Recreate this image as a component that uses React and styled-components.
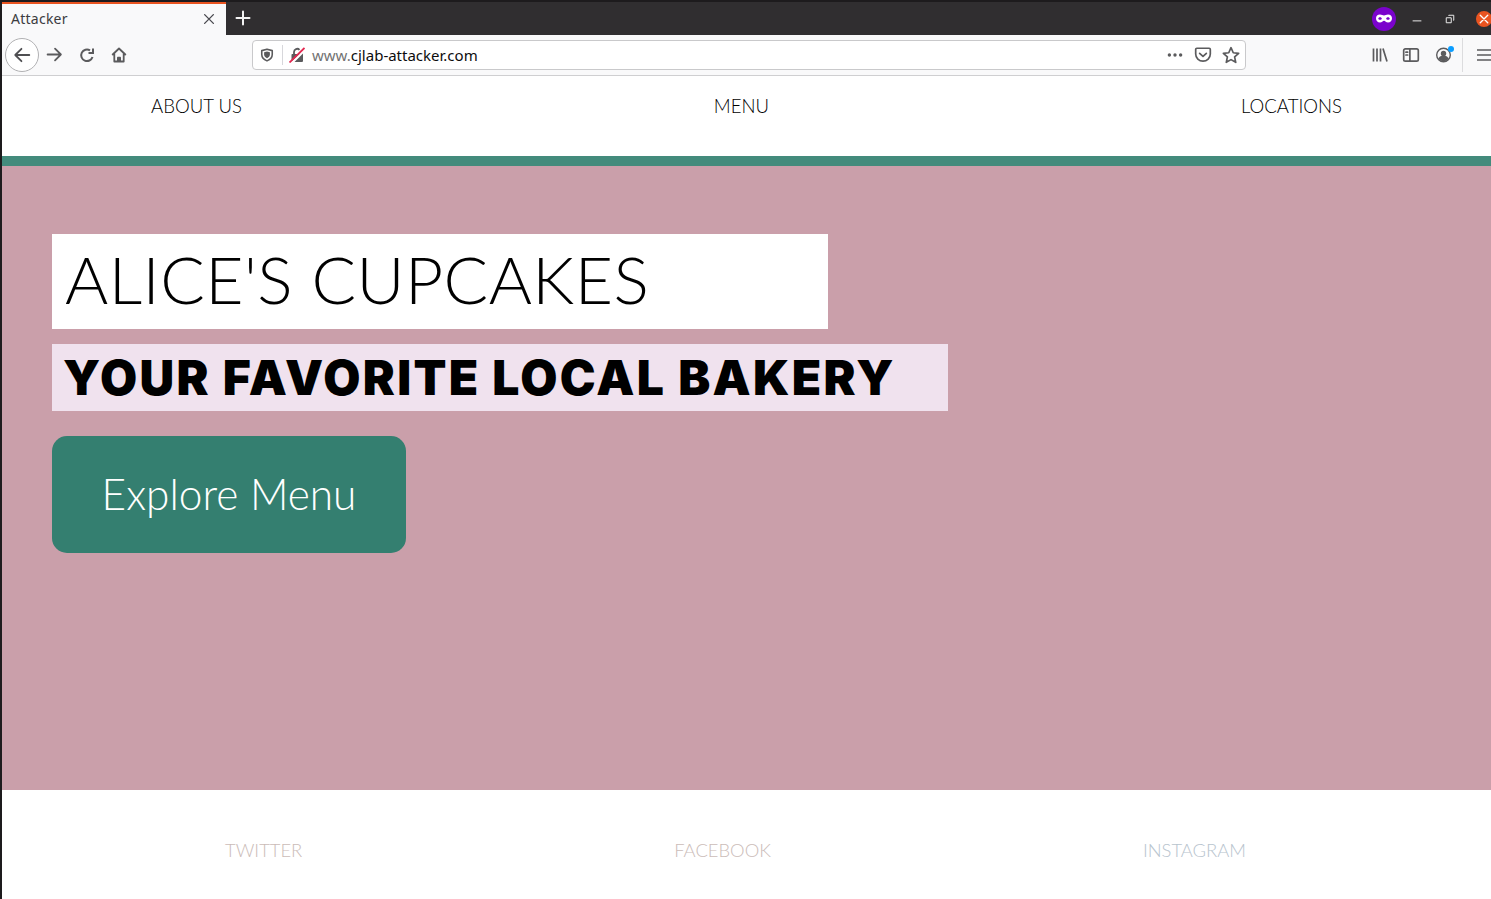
import React from "react";
import styled, { createGlobalStyle } from "styled-components";

const Global = createGlobalStyle`
	html, body {
		margin: 0;
		padding: 0;
		background: #fff;
		overflow: hidden;
	}
	* { box-sizing: border-box; }
`;

const Frame = styled.div`
	width: 1491px;
	height: 899px;
	display: flex;
	flex-direction: column;
	border-left: 2px solid #1d1b1d;
	overflow: hidden;
	font-family: "Lato", "Liberation Sans", sans-serif;
`;

/* browser chrome */
const TabStrip = styled.div`
	height: 35px;
	flex: none;
	display: flex;
	align-items: stretch;
	background: #302e30;
	border-top: 2px solid #1d1b1d;
`;
const Tab = styled.div`
	width: 224px;
	display: flex;
	align-items: center;
	justify-content: space-between;
	padding: 0 10px 2px 9px;
	background: #f9f9fa;
	border-top: 2px solid #e95420;
	font: 14px "Noto Sans", "Open Sans", sans-serif;
	letter-spacing: 0.25px;
	color: #3c3c3f;
`;
const NewTab = styled.div`
	width: 34px;
	padding-bottom: 2px;
	display: flex;
	align-items: center;
	justify-content: center;
`;
const WindowControls = styled.div`
	margin-left: auto;
	margin-right: -1px;
	display: flex;
	align-items: center;
`;
const PrivateBadge = styled.div`
	width: 24px;
	height: 24px;
	border-radius: 50%;
	background: #7a03cc;
	display: flex;
	align-items: center;
	justify-content: center;
	margin-right: 4px;
`;
const WinButton = styled.div`
	width: 33px;
	display: flex;
	align-items: center;
	justify-content: center;
`;
const CloseButton = styled.div`
	width: 16px;
	height: 16px;
	margin-left: 10px;
	border-radius: 50%;
	background: #e95420;
	display: flex;
	align-items: center;
	justify-content: center;
`;
const Toolbar = styled.div`
	height: 41px;
	flex: none;
	display: flex;
	align-items: center;
	background: #f9f9fa;
	border-bottom: 1px solid #cfcfd1;
	padding: 0 0 1px 3px;
`;
const BackButton = styled.div`
	width: 34px;
	height: 34px;
	flex: none;
	border-radius: 50%;
	border: 1px solid #b1b1b3;
	background: #fff;
	display: flex;
	align-items: center;
	justify-content: center;
`;
const NavIcons = styled.div`
	flex: none;
	display: flex;
	align-items: center;
	gap: 16px;
	margin-left: 7px;
	width: 206px;
`;
const UrlBar = styled.div`
	flex: none;
	width: 994px;
	height: 30px;
	display: flex;
	align-items: center;
	background: #fff;
	border: 1px solid #c9c9cb;
	border-radius: 4px;
	padding: 0 5px 0 7px;
`;
const UrlDivider = styled.span`
	width: 1px;
	height: 20px;
	background: #d7d7db;
	margin: 0 6px 0 8px;
`;
const UrlText = styled.span`
	margin-left: 7px;
	font: 15px "Noto Sans", "Open Sans", sans-serif;
	color: #0c0c0d;
`;
const UrlPrefix = styled.span`
	color: #737373;
`;
const UrlActions = styled.div`
	margin-left: auto;
	display: flex;
	align-items: center;
	gap: 10px;
`;
const ToolbarRight = styled.div`
	margin-left: 126px;
	display: flex;
	align-items: center;
	gap: 14px;
	flex: 1;
`;
const ToolbarDivider = styled.span`
	width: 1px;
	height: 34px;
	background: #dcdcde;
	margin-left: -6px;
`;

/* page */
const TopNav = styled.nav`
	height: 80px;
	flex: none;
	display: flex;
	justify-content: space-between;
	align-items: flex-start;
	padding: 18px 149px 0;
	background: #fff;
`;
const NavLink = styled.a`
	font-size: 18.6px;
	font-weight: 300;
	line-height: 24px;
	color: #000;
`;
const Stripe = styled.div`
	height: 10px;
	flex: none;
	background: #438b7c;
`;
const Hero = styled.main`
	height: 624px;
	flex: none;
	padding: 68px 50px 0;
	background: #ca9faa;
	display: flex;
	flex-direction: column;
	align-items: flex-start;
`;
const Title = styled.h1`
	margin: 0;
	width: 776px;
	height: 95px;
	padding-left: 13px;
	background: #fff;
	color: #000;
	font-size: 66px;
	font-weight: 300;
	line-height: 90px;
	letter-spacing: 0.45px;
	white-space: nowrap;
`;
const Subtitle = styled.h2`
	margin: 15px 0 0;
	width: 896px;
	height: 67px;
	padding-left: 11px;
	background: #f0e2ee;
	color: #000;
	font-family: "Inter", "Liberation Sans", sans-serif;
	font-size: 48px;
	font-weight: 900;
	line-height: 67px;
	letter-spacing: 2.3px;
	white-space: nowrap;
`;
const ExploreButton = styled.button`
	margin-top: 25px;
	width: 354px;
	height: 117px;
	padding: 0 0 2px;
	border: 0;
	border-radius: 15px;
	background: #347f70;
	color: #fff;
	font-family: "Lato", "Liberation Sans", sans-serif;
	font-size: 42.4px;
	font-weight: 300;
`;
const Footer = styled.footer`
	flex: 1;
	display: flex;
	justify-content: space-between;
	align-items: flex-start;
	padding: 48px 245px 0 223px;
	background: #fff;
`;
const FooterLink = styled.a`
	font-size: 18.4px;
	font-weight: 300;
	line-height: 24px;
	color: ${(p) => p.$color};
`;

const Icon = ({ size = 16, color = "#5b5b5d", sw = 2, children }) => (
	<svg width={size} height={size} viewBox="0 0 16 16" fill="none" stroke={color} strokeWidth={sw} strokeLinecap="round" strokeLinejoin="round">
		{children}
	</svg>
);

const App = () => (
	<Frame>
		<Global />
		<TabStrip>
			<Tab>
				<span>Attacker</span>
				<Icon size={14} color="#4a4a4f" sw={1.6}><path d="M3 3l10 10M13 3L3 13" /></Icon>
			</Tab>
			<NewTab>
				<Icon size={16} color="#f4f4f4"><path d="M8 1.5v13M1.5 8h13" /></Icon>
			</NewTab>
			<WindowControls>
				<PrivateBadge>
					<svg width="16" height="9" viewBox="0 0 16 9">
						<path fill="#fff" fillRule="evenodd" d="M4 0.5C5.6 0.5 6.8 1.4 8 1.4S10.400 0.5 12 0.5C14.500 0.500 16 2 16 4.200C16 6.800 14.500 8.500 12 8.500C10 8.500 9.300 6.700 8 6.700S6 8.500 4 8.500C1.500 8.500 0 6.800 0 4.200C0 2 1.500 0.500 4 0.500ZM4 3.200C3 3.200 2.300 3.800 2.300 4.500S3 5.800 4 5.800S5.800 5.200 5.800 4.500S5 3.200 4 3.200ZM12 3.200C11 3.200 10.200 3.800 10.200 4.500S11 5.800 12 5.800S13.700 5.200 13.700 4.500S13 3.200 12 3.200Z" />
					</svg>
				</PrivateBadge>
				<WinButton>
					<Icon size={10} color="#f4f4f4" sw={1.500}><path d="M1 11h14" strokeLinecap="butt" /></Icon>
				</WinButton>
				<WinButton>
					<Icon size={10} color="#f4f4f4" sw={1.500}><path d="M2 6h8v8H2zM6 3V2h8v8h-1" strokeLinecap="butt" strokeLinejoin="miter" /></Icon>
				</WinButton>
				<CloseButton>
					<Icon size={10} color="#fff" sw={2.2}><path d="M2 2l12 12M14 2L2 14" /></Icon>
				</CloseButton>
			</WindowControls>
		</TabStrip>
		<Toolbar>
			<BackButton>
				<Icon size={18} color="#4f4f52" sw={1.6}><path d="M14.500 8H2M7.500 2.500L2 8l5.500 5.500" /></Icon>
			</BackButton>
			<NavIcons>
				<Icon size={17} sw={1.700}><path d="M1.500 8H14M8.500 2.500L14 8l-5.500 5.500" /></Icon>
				<Icon size={16} sw={2}><path d="M13.500 10A5.800 5.800 0 1 1 11 3.300M14 1.500v4.500h-4.500" strokeLinecap="butt" strokeLinejoin="miter" /></Icon>
				<svg width="16" height="16" viewBox="0 0 16 16">
					<path fill="none" stroke="#5b5b5d" strokeWidth="1.800" strokeLinejoin="round" d="M1.200 8L8 1.500L14.800 8M3.300 6.800V14.500H12.700V6.800" />
					<path fill="#5b5b5d" d="M6 14.500V10.500a.8.8 0 0 1 .8-.8h2.400a.8.8 0 0 1 .8.8v4z" />
				</svg>
			</NavIcons>
			<UrlBar>
				<svg width="14" height="14" viewBox="0 0 16 16">
					<path fill="none" stroke="#5b5b5d" strokeWidth="1.800" strokeLinejoin="round" d="M8 1.300l6 1.700v4.500c0 3.500-2.700 5.900-6 7.200c-3.300-1.300-6-3.700-6-7.200V3z" />
					<path fill="#5b5b5d" d="M8 4l3.300.9v2.600c0 2-1.500 3.400-3.300 4.200c-1.800-.8-3.300-2.200-3.300-4.200V4.900z" />
				</svg>
				<UrlDivider />
				<svg width="16" height="16" viewBox="0 0 16 16">
					<path fill="none" stroke="#5b5b5d" strokeWidth="1.800" d="M5 7.500V5a3.200 3.200 0 0 1 5.500-2.200" />
					<path fill="#5b5b5d" d="M3 7h7.500L2.500 14.500V8a1 1 0 0 1 .5-1zM14 6.500V14a1 1 0 0 1-1 1H5.500z" />
					<path stroke="#e22850" strokeWidth="1.800" d="M0.500 15.500L15.500 1" />
				</svg>
				<UrlText><UrlPrefix>www.</UrlPrefix>cjlab-attacker.com</UrlText>
				<UrlActions>
					<Icon size={18} sw={0}>
						<circle cx="3" cy="8" r="1.500" fill="#5b5b5d" />
						<circle cx="8" cy="8" r="1.500" fill="#5b5b5d" />
						<circle cx="13" cy="8" r="1.500" fill="#5b5b5d" />
					</Icon>
					<Icon size={18} sw={1.500}><path d="M2.500 2h11a1 1 0 0 1 1 1v4a6.500 6.500 0 0 1-13 0V3a1 1 0 0 1 1-1zM5 6.500L8 9.300l3-2.800" /></Icon>
					<Icon size={18} sw={1.500}><path d="M8 1.500l2 4.500 4.800.5-3.600 3.200 1 4.800L8 12.100l-4.200 2.400 1-4.800L1.200 6.500 6 6z" /></Icon>
				</UrlActions>
			</UrlBar>
			<ToolbarRight>
				<Icon size={16} sw={1.700}><path d="M1.500 1.500v13M5 1.500v13M8.500 1.500v13M11 1.500L15 14.500" strokeLinecap="butt" /></Icon>
				<Icon size={18} sw={1.500}><path d="M3 2.500h10a1.500 1.500 0 0 1 1.500 1.500v8a1.500 1.500 0 0 1-1.500 1.500H3A1.500 1.500 0 0 1 1.500 12V4A1.500 1.500 0 0 1 3 2.500zM7 2.500v11M3.500 5.500h1.500M3.500 8h1.500" /></Icon>
				<svg width="20" height="20" viewBox="0 0 20 20">
					<circle cx="9.500" cy="10" r="6.800" fill="none" stroke="#5b5b5d" strokeWidth="1.400" />
					<circle cx="9.500" cy="8.500" r="2.700" fill="#5b5b5d" />
					<path fill="#5b5b5d" d="M4.500 14a5 3.600 0 0 1 10 0a6.500 6.500 0 0 1-10 0z" />
					<circle cx="17" cy="4" r="3" fill="#0a9dff" />
				</svg>
				<ToolbarDivider />
				<Icon size={16} sw={1.700}><path d="M0 3h16M0 8h16M0 13h16" strokeLinecap="butt" /></Icon>
			</ToolbarRight>
		</Toolbar>

		<TopNav>
			<NavLink>ABOUT US</NavLink>
			<NavLink>MENU</NavLink>
			<NavLink>LOCATIONS</NavLink>
		</TopNav>
		<Stripe />
		<Hero>
			<Title>ALICE'S CUPCAKES</Title>
			<Subtitle>YOUR FAVORITE LOCAL BAKERY</Subtitle>
			<ExploreButton>Explore Menu</ExploreButton>
		</Hero>
		<Footer>
			<FooterLink $color="#cbbcb8">TWITTER</FooterLink>
			<FooterLink $color="#cbbcb8">FACEBOOK</FooterLink>
			<FooterLink $color="#b8c4ce">INSTAGRAM</FooterLink>
		</Footer>
	</Frame>
);

export default App;
